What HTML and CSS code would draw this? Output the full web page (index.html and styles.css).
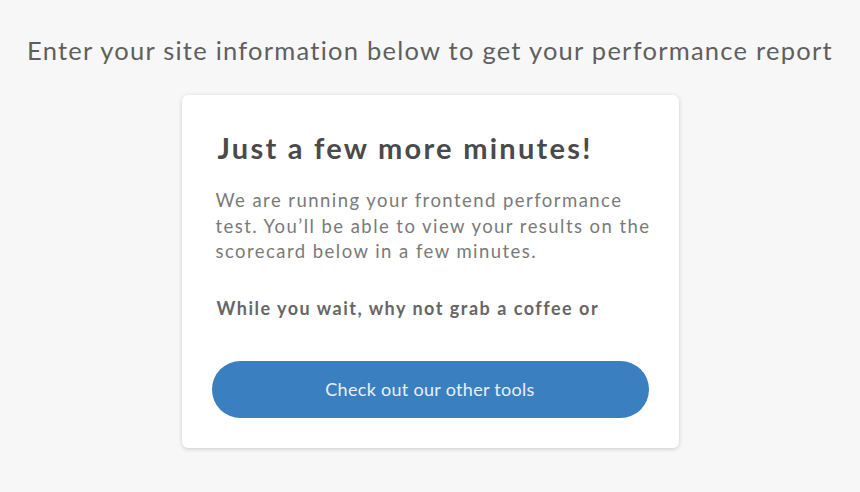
FILE: index.html
```html
<!DOCTYPE html>
<html>
<head>
<meta charset="utf-8">
<link rel="stylesheet" href="styles.css">
</head>
<body>
<div class="page">
  <h1 class="intro">Enter your site information below to get your performance report</h1>
  <div class="card">
    <h2 class="title">Just a few more minutes!</h2>
    <p class="desc">We are running your frontend performance test. You’ll be able to view your results on the scorecard below in a few minutes.</p>
    <p class="wait">While you wait, why not grab a coffee or</p>
    <button class="btn">Check out our other tools</button>
  </div>
</div>
</body>
</html>
```
FILE: styles.css
```css
html, body {
  margin: 0;
  padding: 0;
  background: #f7f7f7;
}
body {
  font-family: Lato, "Open Sans", sans-serif;
  width: 860px;
  height: 492px;
  overflow: hidden;
}
.page {
  display: flex;
  flex-direction: column;
  align-items: center;
  padding-top: 32px;
}
.intro {
  margin: 0;
  font-size: 25.5px;
  font-weight: 400;
  letter-spacing: 1.25px;
  color: #5f5f5f;
  line-height: 36px;
  text-align: center;
}
.card {
  margin-top: 27px;
  width: 497px;
  box-sizing: border-box;
  background: #fff;
  border-radius: 6px;
  box-shadow: 0 1px 4px rgba(0,0,0,0.18);
  padding: 33px 30px 30px;
  display: flex;
  flex-direction: column;
}
.title {
  margin: 0 0 0 6px;
  font-size: 29px;
  font-weight: 700;
  letter-spacing: 2.25px;
  color: #4a4a4a;
  line-height: 40px;
}
.desc {
  margin: 20px -14px 0 4px;
  font-size: 18.5px;
  font-weight: 400;
  letter-spacing: 1.45px;
  color: #7a7a7a;
  line-height: 25.5px;
}
.wait {
  margin: 31px 0 0 5px;
  font-size: 18px;
  font-weight: 700;
  letter-spacing: 1.5px;
  color: #666;
  line-height: 25px;
}
.btn {
  margin-top: 40px;
  height: 57px;
  border: none;
  border-radius: 29px;
  background: #3a7fc0;
  color: #e8f0f8;
  font-family: inherit;
  font-size: 18px;
  font-weight: 400;
  letter-spacing: 0.3px;
}
```
